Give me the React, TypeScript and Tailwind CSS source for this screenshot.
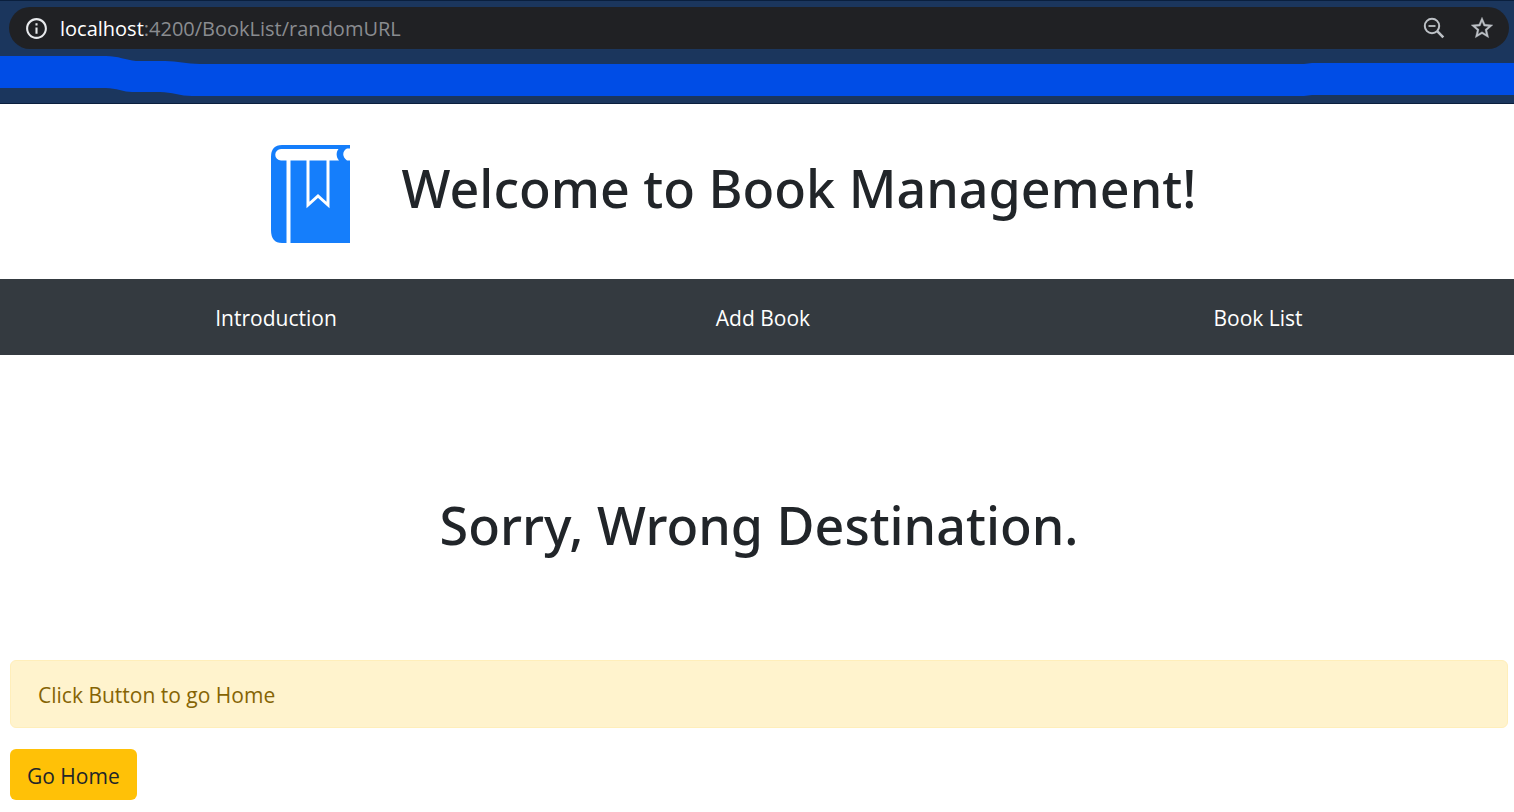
import React from "react";

function InfoIcon() {
  return (
    <svg viewBox="0 0 24 24" className="size-[25px] shrink-0" fill="#e8eaed" aria-hidden="true">
      <path d="M11 7h2v2h-2zm0 4h2v6h-2zm1-9C6.48 2 2 6.48 2 12s4.480 10 10 10 10-4.480 10-10S17.520 2 12 2zm0 18c-4.410 0-8-3.590-8-8s3.590-8 8-8 8 3.590 8 8-3.590 8-8 8z" />
    </svg>
  );
}

function ZoomOutIcon() {
  return (
    <svg viewBox="0 0 26 26" className="size-[26px]" fill="none" stroke="#bdc1c6" aria-hidden="true">
      <circle cx="11" cy="11" r="7.200" strokeWidth="2" />
      <path d="M16.200 16.200L22.300 22.300" strokeWidth="2.600" />
      <path d="M7.500 11H14.500" strokeWidth="1.800" />
    </svg>
  );
}

function StarIcon() {
  return (
    <svg viewBox="0 0 24 24" className="size-[26px]" fill="#bdc1c6" stroke="#bdc1c6" strokeWidth="0.3" aria-hidden="true">
      <path d="M22 9.24l-7.19-.62L12 2 9.19 8.63 2 9.24l5.46 4.73L5.82 21 12 17.27 18.18 21l-1.63-7.03L22 9.24zM12 15.4l-3.76 2.27 1-4.28-3.32-2.88 4.38-.38L12 6.1l1.71 4.04 4.38.38-3.32 2.88 1 4.28L12 15.4z" />
    </svg>
  );
}

function BookLogo() {
  return (
    <svg viewBox="0 0 80 100" className="h-[100px] w-20 shrink-0" role="img" aria-label="Book">
      <path fill="#157efb" d="M12 1H80V4.500H77C72 7 72 13 77 16.500H80V99H12Q1 99 1 86V13Q1 1 12 1Z" />
      <path fill="#fff" d="M11 5H68.500C66 8 66 13 69 16.500H11A5.750 5.750 0 0 1 11 5Z" />
      <path fill="#fff" d="M80 5H78C73.500 7 73.500 13.500 78 16H80Z" />
      <path fill="#fff" d="M16.500 16H20.500V99H16.500Z" />
      <path fill="none" stroke="#fff" strokeWidth="3" d="M38 16V61L48 52L58 61V16" />
    </svg>
  );
}

function BrowserBar() {
  return (
    <div className="border-y border-[#0a1f3d] bg-[#1b365d] pt-1.5">
      <div className="ml-[9px] mr-[5px] flex h-[42px] items-center rounded-full bg-[#202124] pl-[15px] pr-3.5">
        <InfoIcon />
        <div className="ml-[11px] grow pt-0.5 text-[20px] leading-7 text-[#8a8c90]">
          <span className="text-white">localhost</span>:4200/BookList/randomURL
        </div>
        <button type="button" aria-label="Zoom" className="mr-[22px]"><ZoomOutIcon /></button>
        <button type="button" aria-label="Bookmark this page"><StarIcon /></button>
      </div>
      <div className="flex h-[54px] pt-[7px]">
        <svg viewBox="0 0 200 41" className="h-[41px] w-[200px] shrink-0" fill="#004de6" aria-hidden="true">
          <path d="M0 0H106C118 0 126 4 136 5H165C178 5 186 8 200 8V40H192C180 40 172 36 160 36H132C124 36 116 32 106 32H0Z" />
        </svg>
        <svg viewBox="0 0 1314 41" preserveAspectRatio="none" className="h-[41px] min-w-0 grow" fill="#004de6" aria-hidden="true">
          <path d="M0 8H1104L1112 7H1314V39H1112L1104 40H0Z" />
        </svg>
      </div>
    </div>
  );
}

export default function App() {
  return (
    <div className="bg-white font-['Open_Sans','Noto_Sans',sans-serif] text-[#212529]">
      <BrowserBar />
      <header className="flex h-[175px] items-start justify-center gap-[52px] pt-10 pr-12">
        <BookLogo />
        <h1 className="mt-3 font-['Noto_Sans','Open_Sans',sans-serif] text-[52px] leading-16 font-medium">
          Welcome to Book Management!
        </h1>
      </header>
      <nav className="grid h-[76px] grid-cols-[492fr_482fr_508fr] items-center bg-[#343a40] pt-0.5 pl-[30px] pr-0.5 text-center text-[21px] leading-8 text-white">
        <a href="#introduction">Introduction</a>
        <a href="#add-book">Add Book</a>
        <a href="#book-list">Book List</a>
      </nav>
      <main className="pl-2.5 pr-1.5 pb-3">
        <h2 className="pt-[138px] pb-[103px] text-center font-['Noto_Sans','Open_Sans',sans-serif] text-[52px] leading-16 font-medium">
          Sorry, Wrong Destination.
        </h2>
        <div role="alert" className="flex h-[68px] items-center rounded-md border border-[#ffeeba] bg-[#fff3cd] px-[27px] pt-0.5 text-[21px] leading-8 text-[#856404]">
          Click Button to go Home
        </div>
        <button type="button" className="mt-[21px] h-[51px] rounded-md bg-[#ffc107] px-[17px] pt-0.5 text-[21px] leading-8">
          Go Home
        </button>
      </main>
    </div>
  );
}
